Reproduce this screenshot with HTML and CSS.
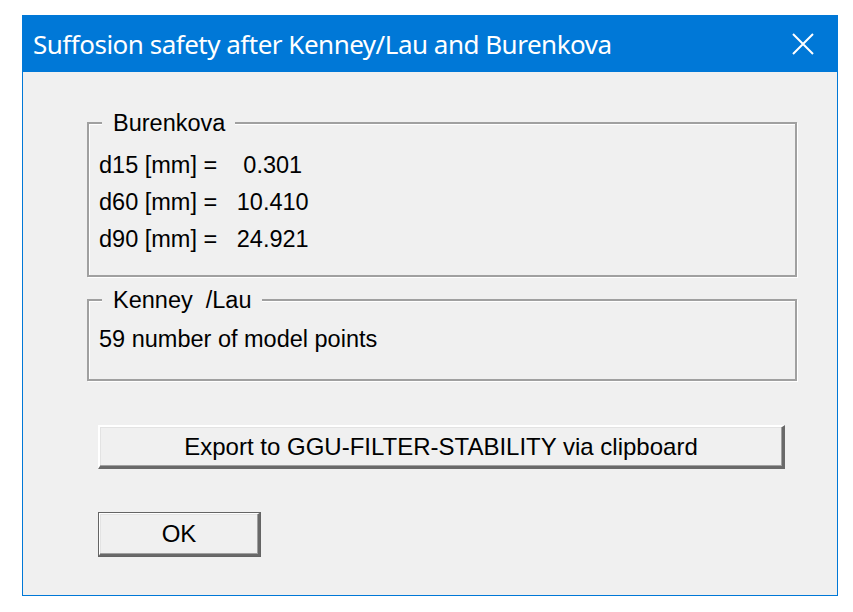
FILE: index.html
```html
<!DOCTYPE html>
<html lang="en">
<head>
    <meta charset="UTF-8">
    <title>Suffosion safety after Kenney/Lau and Burenkova</title>
    <link rel="stylesheet" href="styles.css">
</head>
<body>
    <div class="window">
        <div class="titlebar">
            <span class="title">Suffosion safety after Kenney/Lau and Burenkova</span>
            <svg class="close" width="22" height="22" viewBox="0 0 22 22">
                <path d="M1 1 L21 21 M21 1 L1 21" stroke="#fff" stroke-width="2" fill="none"/>
            </svg>
        </div>
        <div class="dialog">
            <fieldset class="group group-burenkova">
                <legend>Burenkova</legend>
                <div class="row">d15 [mm] =    0.301</div>
                <div class="row">d60 [mm] =   10.410</div>
                <div class="row">d90 [mm] =   24.921</div>
            </fieldset>

            <fieldset class="group group-kenney">
                <legend>Kenney  /Lau</legend>
                <div class="row">59 number of model points</div>
            </fieldset>

            <button class="btn btn-export">Export to GGU-FILTER-STABILITY via clipboard</button>
            <button class="btn btn-ok">OK</button>
        </div>
    </div>
</body>
</html>
```

FILE: styles.css
```css
body {
    margin: 0;
    background: #ffffff;
    font-family: "Liberation Sans", Arial, sans-serif;
}
.window {
    margin: 15px 0 0 22px;
    width: 816px;
    height: 581px;
    box-sizing: border-box;
    border: 1px solid #0078d7;
    display: flex;
    flex-direction: column;
}
.titlebar {
    height: 56px;
    background: #0078d7;
    display: flex;
    align-items: center;
    justify-content: space-between;
    padding-left: 10px;
}
.title {
    color: #ffffff;
    font-family: "Noto Sans", sans-serif;
    font-size: 26px;
    letter-spacing: -0.5px;
    line-height: 1;
}
.close {
    margin-right: 23px;
}
.dialog {
    flex: 1;
    background: #f0f0f0;
    padding-left: 64px;
    font-size: 24px;
    color: #000;
}
.group {
    width: 710px;
    box-sizing: border-box;
    margin: 0;
    padding: 10px 10px 17px 10px;
    border: 2px solid #a0a0a0;
    box-shadow: inset 1px 1px #ffffff, 1px 1px #ffffff;
    font-size: 23.5px;
}
.group legend {
    margin-left: 3px;
    padding: 0 10px 0 11px;
    line-height: 28px;
    white-space: pre;
    background: #f0f0f0;
}
.group-burenkova {
    margin-top: 37px;
}
.group-kenney {
    margin-top: 9px;
    padding-top: 7px;
    padding-bottom: 21px;
}
.row {
    line-height: 37px;
    white-space: pre;
}
.btn {
    display: block;
    margin-left: 11px;
    font-family: "Liberation Sans", Arial, sans-serif;
    font-size: 24px;
    color: #000;
    background: #f0f0f0;
    box-sizing: border-box;
    padding: 0;
    border-style: solid;
    border-width: 2px 3px 3px 2px;
    border-color: #ffffff #696969 #696969 #ffffff;
    box-shadow: inset -1px -1px #a0a0a0, inset 1px 1px #e3e3e3;
}
.btn-export {
    margin-top: 44px;
    width: 687px;
    height: 44px;
}
.btn-ok {
    margin-top: 43px;
    width: 163px;
    height: 45px;
    outline: 1px solid #646464;
    outline-offset: -1px;
}
```
